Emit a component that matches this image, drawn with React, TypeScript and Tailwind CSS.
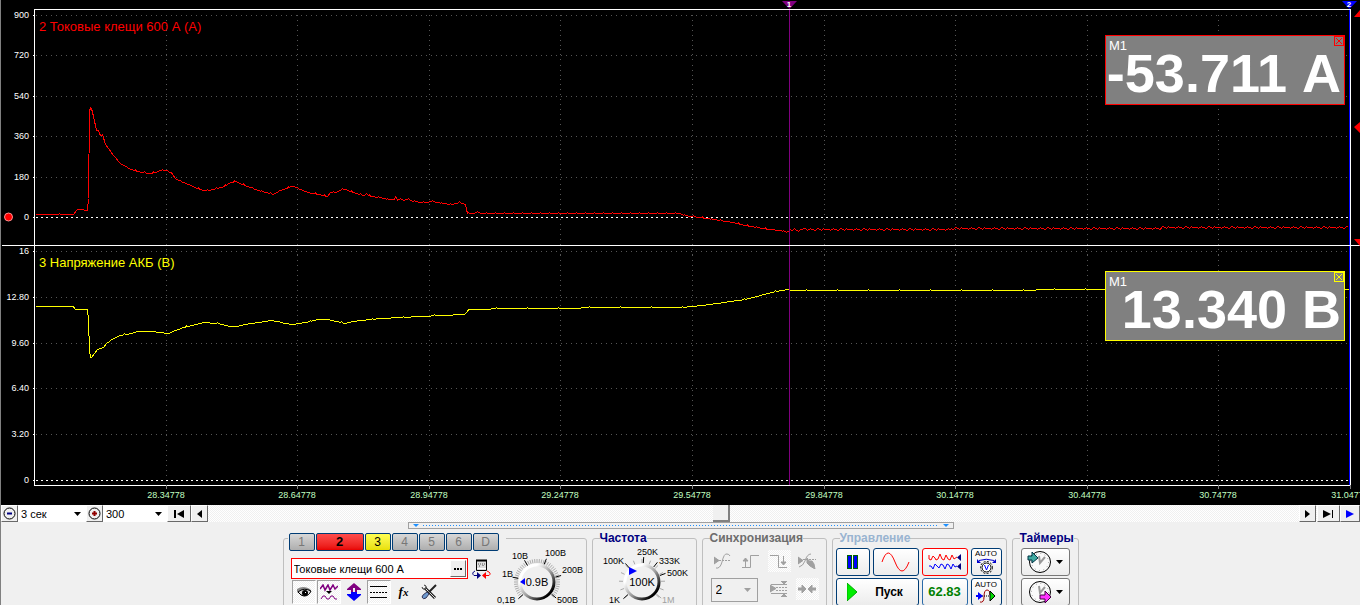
import { useState, type ReactNode } from "react";
import clsx from "clsx";

type Point = [number, number];

const CURRENT: Point[] = [
  [35, 214], [58, 214], [59, 213], [60, 214], [73, 214], [75, 211], [77, 209], [83, 209], [84, 210], [87, 210],
  [88, 198], [89, 111], [90, 107], [91, 108], [93, 116], [96, 130], [98, 130], [100, 135], [102, 134], [105, 144],
  [109, 149], [113, 155], [120, 163], [125, 166], [131, 169], [137, 171], [143, 172], [149, 173], [155, 172],
  [160, 170], [167, 170], [172, 174], [176, 179], [183, 182], [190, 185], [197, 188], [203, 190], [209, 190],
  [216, 188], [224, 186], [230, 182], [236, 181], [242, 184], [250, 187], [258, 190], [266, 192], [273, 194],
  [280, 190], [286, 188], [291, 186], [294, 186], [300, 189], [307, 192], [318, 194], [327, 196], [330, 192],
  [335, 192], [341, 189], [345, 189], [350, 191], [356, 193], [364, 195], [366, 193], [370, 196], [380, 197],
  [388, 199], [394, 199], [395, 196], [397, 200], [400, 198], [404, 200], [408, 198], [412, 201], [424, 202],
  [432, 201], [442, 203], [452, 204], [459, 202], [465, 204], [467, 213], [473, 213], [475, 212], [485, 213],
  [540, 213], [679, 213], [684, 215], [692, 216], [706, 218], [720, 220], [732, 222], [745, 225], [757, 227],
  [768, 229], [780, 230], [787, 232], [790, 229], [800, 230], [803, 228], [808, 229], [900, 229], [1000, 228],
  [1100, 228], [1220, 227], [1348, 227],
];

const VOLTAGE: Point[] = [
  [35, 306], [73, 306], [75, 309], [87, 309], [88, 320], [89, 350], [90, 357], [91, 357], [97, 349], [103, 347],
  [106, 343], [113, 338], [120, 335], [131, 333], [137, 331], [149, 331], [160, 332], [168, 333], [175, 330],
  [183, 327], [192, 325], [203, 322], [217, 323], [230, 326], [236, 326], [245, 324], [258, 322], [270, 320],
  [277, 321], [285, 323], [292, 324], [305, 322], [318, 319], [328, 319], [336, 321], [345, 323], [352, 321],
  [370, 319], [380, 318], [400, 317], [420, 316], [440, 315], [465, 314], [468, 309], [480, 309], [500, 308],
  [660, 307], [680, 307], [692, 306], [710, 304], [730, 301], [745, 299], [760, 295], [775, 291], [787, 289],
  [790, 290], [970, 290], [1100, 289], [1348, 289],
];

const NOISE = [0, 0, 1, 0, 0, -1, 0, 0, 0, 1, 1, 0, -1, -1, 0, 0, 1, 0, -1, 0, 0, 0, 0];

// One sample per column, with a little sensor noise from column `from` on.
function trace(points: Point[], from: number, every: number) {
  const out: string[] = [];
  let i = 0;
  for (let x = points[0][0]; x <= points[points.length - 1][0]; x++) {
    while (i < points.length - 2 && points[i + 1][0] <= x) i++;
    const [x0, y0] = points[i];
    const [x1, y1] = points[i + 1];
    let y = y0 + ((y1 - y0) * (x - x0)) / (x1 - x0);
    if (x >= from) y += NOISE[x % NOISE.length];
    else if (x > 120 && x % every === 0) y -= 1;
    out.push(`${x},${Math.round(y)}`);
  }
  return out.join(" ");
}

const UPPER = [["900", 15], ["720", 55], ["540", 96], ["360", 136], ["180", 177], ["0", 217]] as const;
const LOWER = [["16", 251], ["12.80", 297], ["9.60", 343], ["6.40", 388], ["3.20", 434], ["0", 480]] as const;
const TIMES = [
  ["28.34778", 166], ["28.64778", 297], ["28.94778", 429], ["29.24778", 560], ["29.54778", 692],
  ["29.84778", 824], ["30.14778", 955], ["30.44778", 1087], ["30.74778", 1218], ["31.04778", 1350],
] as const;

function Chart() {
  return (
    <svg viewBox="1 0 1359 505" className="block h-auto w-full bg-black font-['Liberation_Sans',sans-serif]">
      <g transform="translate(.5 .5)" shapeRendering="crispEdges" fill="none">
        <g stroke="#555" strokeDasharray="1 4">
          {[...UPPER.slice(0, 5), ...LOWER.slice(0, 5)].map(([, y]) => (
            <path key={y} d={`M35 ${y}H1349`} />
          ))}
          {TIMES.slice(0, 9).map(([, x]) => (
            <path key={x} d={`M${x} 14V484`} />
          ))}
        </g>
        <path d="M35 217H1349" stroke="#fff" strokeDasharray="2 3" />
        <path d="M35 480H1349" stroke="#fff" strokeDasharray="2 3" />
        <polyline points={trace(CURRENT, 787, 9)} stroke="#f00" />
        <polyline points={trace(VOLTAGE, 5000, 31)} stroke="#ff0" />
        <path d="M789 9V485" stroke="#800080" />
        <path d="M1349 9V485" stroke="#00f" />
        <path d="M34 485V9H1350V485M34 485H1350M1 245H1360" stroke="#fff" />
        {[...UPPER, ...LOWER].map(([, y]) => (
          <path key={y} d={`M32 ${y}H34`} stroke="#fff" />
        ))}
        {TIMES.map(([, x]) => (
          <path key={x} d={`M${x} 484V488`} stroke="#808080" />
        ))}
      </g>
      <circle cx="8.500" cy="217" r="4" fill="#f00" stroke="#ff9090" />
      <path d="M1360 10V17H1354ZM1360 122V133L1354 127ZM1354 239H1360V246Z" fill="#f00" />
      <path d="M782 1H797L789.5 9Z" fill="#800080" />
      <path d="M1342 1H1357L1349.5 9Z" fill="#00f" />
      <g fill="#fff" fontSize="8" fontWeight="bold" textAnchor="middle">
        <text x="789" y="7">1</text>
        <text x="1349" y="7">2</text>
      </g>
      <g fill="#fff" fontSize="9" textAnchor="end">
        {[...UPPER, ...LOWER].map(([label, y]) => (
          <text key={y} x="29" y={y + 3}>{label}</text>
        ))}
      </g>
      <g fill="#c0ffc0" fontSize="9" textAnchor="middle">
        {TIMES.map(([label, x]) => (
          <text key={x} x={x} y="498">{label}</text>
        ))}
      </g>
      <g fontSize="13">
        <text x="39" y="31" fill="#f00">2 Токовые клещи 600 А (А)</text>
        <text x="39" y="267" fill="#ff0">3 Напряжение АКБ (В)</text>
      </g>
    </svg>
  );
}

function Readout({ value, className }: { value: string; className: string }) {
  return (
    <div className={clsx("absolute right-[15px] h-[70px] w-60 border bg-[#808080]", className)}>
      <span className="absolute left-[3px] top-[2px] text-[13px] leading-4 text-white">M1</span>
      <button aria-label="Закрыть" className="absolute right-0 top-0 size-[10px] border border-current">
        <svg viewBox="0 0 8 8" className="block size-2" stroke="currentColor" shapeRendering="crispEdges">
          <path d="M1 1L7 7M7 1L1 7" />
        </svg>
      </button>
      <div className="whitespace-nowrap pr-[3px] text-right text-[54px] font-bold leading-[74px] text-white">
        {value}
      </div>
    </div>
  );
}

const RAISED =
  "flex h-full shrink-0 items-center justify-center border border-b-[#696969] border-l-white border-r-[#696969] border-t-white bg-[#f0f0f0]";
const DITHER = "bg-[repeating-conic-gradient(#fff_0_25%,#f0f0f0_0_50%)] bg-[length:2px_2px]";

function Combo({ label, value, className }: { label: string; value: string; className: string }) {
  return (
    <div className={clsx("relative h-full shrink-0", className)}>
      <select aria-label={label} className="block size-full appearance-none bg-transparent pl-[3px] text-[11px] leading-4 text-black">
        <option>{value}</option>
      </select>
      <svg viewBox="0 0 7 4" className="pointer-events-none absolute right-[5px] top-[7px] h-1 w-[7px]">
        <path d="M0 0H7L3.500 4Z" fill="currentColor" />
      </svg>
    </div>
  );
}

function ScrollRow() {
  return (
    <div className={clsx("flex h-[17px] items-center", DITHER)}>
      <button aria-label="Сжать" className={clsx(RAISED, "w-[17px]")}>
        <svg viewBox="0 0 13 13" className="size-[13px]" fill="none">
          <circle cx="6.500" cy="6.500" r="5.500" stroke="#000" />
          <path d="M4 6.500H9" stroke="#000080" strokeWidth="2" />
        </svg>
      </button>
      <Combo label="Развёртка" value="3 сек" className="w-[68px] bg-white" />
      <button aria-label="Растянуть" className={clsx(RAISED, "w-[17px]")}>
        <svg viewBox="0 0 13 13" className="size-[13px]" fill="none">
          <circle cx="6.500" cy="6.500" r="5.500" stroke="#000" />
          <path d="M4 6.500H9M6.500 4V9" stroke="#900000" strokeWidth="2" />
        </svg>
      </button>
      <Combo label="Масштаб" value="300" className="w-16 bg-white" />
      <button aria-label="В начало" className={clsx(RAISED, "w-6")}>
        <svg viewBox="0 0 11 8" className="h-2 w-[11px]"><path d="M0 0H2V8H0ZM10 0V8L3 4Z" /></svg>
      </button>
      <button aria-label="Назад" className={clsx(RAISED, "w-[17px]")}>
        <svg viewBox="0 0 5 8" className="h-2 w-[5px]"><path d="M5 0V8L0 4Z" /></svg>
      </button>
      <input
        type="range"
        aria-label="Прокрутка"
        min={0}
        max={1000}
        defaultValue={470}
        className="h-full min-w-0 flex-1 appearance-none bg-transparent [&::-webkit-slider-thumb]:h-[17px] [&::-webkit-slider-thumb]:w-[17px] [&::-webkit-slider-thumb]:appearance-none [&::-webkit-slider-thumb]:border-b-2 [&::-webkit-slider-thumb]:border-r-2 [&::-webkit-slider-thumb]:border-[#808080] [&::-webkit-slider-thumb]:bg-[#f0f0f0]"
      />
      <button aria-label="Вперёд" className={clsx(RAISED, "mr-px w-[17px]")}>
        <svg viewBox="0 0 5 8" className="h-2 w-[5px]"><path d="M0 0V8L5 4Z" /></svg>
      </button>
      <button aria-label="В конец" className={clsx(RAISED, "w-[23px]")}>
        <svg viewBox="0 0 11 8" className="h-2 w-[11px]"><path d="M0 0L8 4L0 8ZM9 0H10V8H9Z" /></svg>
      </button>
      <button aria-label="Следить" className={clsx(RAISED, "w-5")}>
        <svg viewBox="0 0 8 8" className="size-2"><path d="M0 0L8 4L0 8Z" fill="#00f" /></svg>
      </button>
    </div>
  );
}

function Splitter() {
  return (
    <div className="mx-auto flex h-[7px] w-[546px] items-center gap-1 border border-[#a0a0a0] px-1">
      <svg viewBox="0 0 6 3" className="h-[3px] w-[6px]"><path d="M0 0H6L3 3Z" fill="#1e90ff" /></svg>
      <div className="h-px min-w-0 flex-1 bg-[repeating-linear-gradient(90deg,#1e90ff_0_1px,transparent_1px_3px)]" />
      <svg viewBox="0 0 6 3" className="h-[3px] w-[6px]"><path d="M0 0H6L3 3Z" fill="#1e90ff" /></svg>
    </div>
  );
}

function Group({ title, tone, className, children }: { title: string; tone: string; className: string; children: ReactNode }) {
  return (
    <fieldset className={clsx("rounded-[3px] border border-[#bfbfbf]", className)}>
      <legend className={clsx("ml-[7px] h-[14px] text-[12px] font-bold leading-[14px]", tone)}>{title}</legend>
      {children}
    </fieldset>
  );
}

type Mark = { text: string; x: number; y: number; angle: number; off?: boolean };

function polar(cx: number, cy: number, r: number, deg: number) {
  const a = (deg * Math.PI) / 180;
  return `${(cx + r * Math.sin(a)).toFixed(1)} ${(cy - r * Math.cos(a)).toFixed(1)}`;
}

type KnobProps = { id: string; cx: number; step: number; marks: Mark[]; value: string; pointer: string; className: string; box: string };

function Knob({ id, cx, step, marks, value, pointer, className, box }: KnobProps) {
  const cy = 37;
  const ticks: number[] = [];
  for (let a = -132; a <= 132; a += step) ticks.push(a);
  return (
    <svg viewBox={box} className={clsx("block shrink-0", className)}>
      <defs>
        <linearGradient id={id} x1="0" y1="0" x2="1" y2="1">
          <stop offset="0.250" stopColor="#fff" />
          <stop offset="0.550" stopColor="#999" />
          <stop offset="0.850" stopColor="#000" />
        </linearGradient>
      </defs>
      {ticks.map((a) => (
        <path key={a} d={`M${polar(cx, cy, 19, a)}L${polar(cx, cy, 23, a)}`} stroke="#aaa" />
      ))}
      {marks.map((m) => (
        <path key={m.text} d={`M${polar(cx, cy, 19, m.angle)}L${polar(cx, cy, 25, m.angle)}`} stroke={m.off ? "#aaa" : "#000"} />
      ))}
      <circle cx={cx} cy={cy} r="17" fill="#f0f0f0" stroke={`url(#${id})`} strokeWidth="3" />
      <path d={pointer} fill="#00f" />
      <g fontSize="9">
        {marks.map((m) => (
          <text key={m.text} x={m.x} y={m.y} fill={m.off ? "#a0a0a0" : "#000"}>{m.text}</text>
        ))}
      </g>
      <text x={cx} y={cy + 4} fontSize="11" textAnchor="middle">{value}</text>
    </svg>
  );
}

const VOLT_MARKS: Mark[] = [
  { text: "0,1В", x: 1, y: 58, angle: -132 },
  { text: "1В", x: 6, y: 32, angle: -79 },
  { text: "10В", x: 16, y: 14, angle: -30 },
  { text: "100В", x: 49, y: 11, angle: 22 },
  { text: "200В", x: 66, y: 28, angle: 75 },
  { text: "500В", x: 61, y: 58, angle: 130 },
];

const RATE_MARKS: Mark[] = [
  { text: "1K", x: 15, y: 58, angle: -132 },
  { text: "100K", x: 9, y: 19, angle: -42 },
  { text: "250K", x: 43, y: 10, angle: 4 },
  { text: "333K", x: 65, y: 19, angle: 38 },
  { text: "500K", x: 73, y: 31, angle: 70 },
  { text: "1M", x: 68, y: 58, angle: 130, off: true },
];

const CHANNELS = ["1", "2", "3", "4", "5", "6", "D"];

function channelStyle(name: string) {
  if (name === "2") return "w-12 bg-linear-to-b from-[#ff4a4a] to-[#e80000] text-[13px] font-bold text-black";
  if (name === "3") return "w-[26px] bg-linear-to-b from-[#ffff50] to-[#e8e000] text-black";
  return "w-[26px] bg-linear-to-b from-[#d8d8d8] to-[#aeaeae] text-[#777]";
}

function ToolButton({ label, pressed, children }: { label: string; pressed?: boolean; children: ReactNode }) {
  return (
    <button
      aria-label={label}
      aria-pressed={pressed}
      className={clsx(
        "flex h-6 w-6 items-center justify-center border",
        pressed ? ["border-b-white border-l-[#a0a0a0] border-r-white border-t-[#a0a0a0]", DITHER] : "border-transparent",
      )}
    >
      {children}
    </button>
  );
}

function ChannelPanel() {
  const [name, setName] = useState("Токовые клещи 600 А");
  return (
    <fieldset className="mt-[2px] w-[303px] rounded-[3px] border border-[#bfbfbf]">
      <legend className="ml-1 h-[10px] w-[218px]">
        <div className="flex gap-px pl-px">
          {CHANNELS.map((c) => (
            <button key={c} className={clsx("h-[18px] rounded-[2px] border border-[#003c74] text-[12px] leading-4", channelStyle(c))}>
              {c}
            </button>
          ))}
        </div>
      </legend>
      <div className="flex">
        <div className="ml-[7px] w-[205px] pt-[15px]">
          <div className="flex items-center gap-1">
            <div className="flex h-[21px] w-[177px] border border-[#f00] bg-white p-px">
              <input
                aria-label="Имя канала"
                value={name}
                onChange={(e) => setName(e.target.value)}
                className="min-w-0 flex-1 pl-px text-[11px] leading-4 text-black outline-none"
              />
              <button aria-label="Выбрать датчик" className={clsx(RAISED, "w-4")}>
                <svg viewBox="0 0 8 2" className="h-[2px] w-2"><path d="M0 0H2V2H0ZM3 0H5V2H3ZM6 0H8V2H6Z" /></svg>
              </button>
            </div>
            <button aria-label="Полярность">
              <svg viewBox="0 0 20 20" className="block size-5" fill="none">
                <path d="M4.500 1.500H14.500V11.500H4.500Z" stroke="#000" fill="#ddd" />
                <path d="M4 1.500H15" stroke="#000" strokeWidth="2" />
                <path d="M6 5H13M7 7H9M11 6V8" stroke="#555" strokeDasharray="1 1" />
                <path d="M5 9.500H14" stroke="#fff" />
                <path d="M3 12Q-1 14 2 16.500H5" stroke="#000080" />
                <path d="M5 13L9 16.500L5 20Z" fill="#000080" />
                <path d="M15 12Q20 14 17 16.500H14" stroke="#f00" />
                <path d="M14 13L10 16.500L14 20Z" fill="#f00" />
              </svg>
            </button>
          </div>
          <div className="flex gap-px pl-px pt-px">
            <ToolButton label="Показать канал" pressed>
              <svg viewBox="0 0 16 12" className="h-3 w-4">
                <path d="M1 3Q7 -1 14 3L15 5L12 9Q7 12 4 8L1 6Z" fill="#888" />
                <path d="M2 6Q8 1 15 5Q13 10 8 10Q5 10 2 6Z" fill="#ddd" stroke="#000" />
                <circle cx="9" cy="7" r="3" fill="#000" />
                <path d="M9 6H10V7H9Z" fill="#fff" />
              </svg>
            </ToolButton>
            <ToolButton label="Фильтр" pressed>
              <svg viewBox="0 0 18 16" className="h-4 w-[18px]" fill="none" stroke="#800080">
                <path d="M0 5L3 1L5 6L8 1L10 6L13 1L15 5L18 2" strokeWidth="1.500" />
                <path d="M1 15L3 12H5L7 15H9L11 12H13L15 15H17" />
                <path d="M6 7H12L9 10Z" fill="#000" stroke="none" />
              </svg>
            </ToolButton>
            <ToolButton label="Инвертировать">
              <svg viewBox="0 0 14 18" className="h-[18px] w-[14px]">
                <path d="M7 0L14 6V7H10V9H4V7H0V6Z" fill="#800080" />
                <path d="M7 18L14 12V11H10V9H4V11H0V12Z" fill="#00f" />
                <path d="M6 5H8V9H6Z" fill="#f0f0f0" />
              </svg>
            </ToolButton>
            <ToolButton label="Уровни" pressed>
              <svg viewBox="0 0 17 12" className="h-3 w-[17px]" stroke="#000" shapeRendering="crispEdges">
                <path d="M0 0.500H17M0 11.500H17" />
                <path d="M0 6.500H17" strokeDasharray="2 1" />
              </svg>
            </ToolButton>
            <ToolButton label="Функция">
              <span className="font-['Liberation_Serif',serif] text-[13px] font-bold italic leading-4 text-black">
                f<span className="text-[11px]">x</span>
              </span>
            </ToolButton>
            <ToolButton label="Настройка">
              <svg viewBox="0 0 16 16" className="size-4" fill="none">
                <path d="M4 4L14 14" stroke="#222" strokeWidth="3" />
                <path d="M4 4L14 14" stroke="#ddd" />
                <path d="M1 3L2 5H5V2L3 1" stroke="#333" />
                <path d="M15 1L8 8" stroke="#222" strokeWidth="2" />
                <path d="M6 8L8 10L5 14Q2 16 1 13Q1 11 6 8Z" fill="#6f9bd0" stroke="#335" />
              </svg>
            </ToolButton>
          </div>
        </div>
        <Knob
          id="volt-rim"
          cx={41}
          step={6}
          marks={VOLT_MARKS}
          value="0.9В"
          pointer="M24 37L29 33V40Z"
          box="0 0 90 62"
          className="mt-[2px] h-[62px] w-[90px]"
        />
      </div>
    </fieldset>
  );
}

function SyncButton({ label, lit, children }: { label: string; lit?: boolean; children: ReactNode }) {
  return (
    <button aria-label={label} disabled className={clsx("flex h-[22px] w-[23px] items-center justify-center", lit && DITHER)}>
      <svg viewBox="0 0 18 16" className="h-4 w-[18px]" fill="none" stroke="#a0a0a0">
        {children}
      </svg>
    </button>
  );
}

function SyncPanel() {
  return (
    <Group title="Синхронизация" tone="text-[#6d6d6d]" className="w-[125px]">
      <div className="flex gap-[5px] pl-[9px] pt-[5px]">
        <SyncButton label="По уровню">
          <path d="M0 4L5 7.500L0 11Z" fill="#a0a0a0" />
          <path d="M2 15Q6 16 8 9Q10 0 13 1Q15 1 16 3" />
          <path d="M5 7.500H17" strokeDasharray="2 1" />
        </SyncButton>
        <SyncButton label="По фронту">
          <path d="M0 14.500H8.500V2.500H17" />
          <path d="M3.500 14V7" />
          <path d="M1 8H6L3.500 5Z" fill="#a0a0a0" />
        </SyncButton>
        <SyncButton label="По спаду" lit>
          <path d="M0 2.500H8.500V14.500H17" />
          <path d="M13.500 3V10" />
          <path d="M11 9H16L13.500 12Z" fill="#a0a0a0" />
        </SyncButton>
        <SyncButton label="Вручную">
          <path d="M0 4L5 7.500L0 11Z" fill="#a0a0a0" />
          <path d="M1 14Q5 13 7 8Q9 1 13 1" />
          <path d="M5 6.500H18" strokeDasharray="2 1" />
          <path d="M9 5L11 8H14L16 11L17 16L12 13L9 10Z" fill="#a0a0a0" />
        </SyncButton>
      </div>
      <div className="flex pl-2 pt-[6px]">
        <div className="relative mr-[10px] h-6 w-[47px] border border-[#a0a0a0]">
          <select aria-label="Канал синхронизации" className="block size-full appearance-none pl-1 text-[12px] text-black">
            <option>2</option>
          </select>
          <svg viewBox="0 0 7 4" className="pointer-events-none absolute right-[6px] top-[9px] h-1 w-[7px]">
            <path d="M0 0H7L3.500 4Z" fill="#a0a0a0" />
          </svg>
        </div>
        <SyncButton label="Гистерезис">
          <path d="M0 4L6 7.500L0 11Z" fill="#a0a0a0" />
          <path d="M1 3.500H17M1 12.500H17" />
          <path d="M6 6.500H17M6 9.500H17" strokeDasharray="2 1" />
          <path d="M11 0H17L14 3ZM11 16H17L14 13Z" fill="#a0a0a0" />
        </SyncButton>
        <div className="w-[5px]" />
        <SyncButton label="По центру" lit>
          <path d="M0 8H5M18 8H13" strokeWidth="3" />
          <path d="M4 4L8 8L4 12ZM14 4L10 8L14 12Z" fill="#a0a0a0" />
        </SyncButton>
      </div>
    </Group>
  );
}

const XP = "flex h-7 items-center justify-center rounded-[3px] border bg-linear-to-b from-white to-[#ececec]";

function ControlPanel() {
  return (
    <Group title="Управление" tone="text-[#99b4d1]" className="w-[175px]">
      <div className="flex gap-[3px] pl-[3px] pt-[3px]">
        <button aria-label="Пауза" className={clsx(XP, "w-[34px] border-[#003c74]")}>
          <svg viewBox="0 0 12 14" className="h-[14px] w-3" fill="#00f" stroke="#006400" shapeRendering="crispEdges">
            <path d="M0.500 0.500H4.500V13.500H0.500ZM6.500 0.500H10.500V13.500H6.500Z" />
          </svg>
        </button>
        <button aria-label="Осциллограф" className={clsx(XP, "w-[46px] border-[#003c74]")}>
          <svg viewBox="0 0 29 20" className="h-5 w-[29px]" fill="none" stroke="#f00">
            <path d="M1 10Q7 -8 14 10T28 10" />
          </svg>
        </button>
        <button aria-label="Самописец" className={clsx(XP, "w-[46px] border-[#f00]")}>
          <svg viewBox="0 0 34 18" className="h-[18px] w-[34px]" fill="none">
            <path d="M1 2V6L3 7L5 3L7 5L8 7L10 6L12 1L14 6L16 7L18 2L20 6L22 7L24 2L26 6L29 4" stroke="#f00" />
            <path d="M1 13H3L5 16L7 11L9 13L11 15L13 11L15 12L17 16L19 11L21 12L23 16L25 11L27 14L29 13" stroke="#00f" />
            <path d="M33 1V8L29 4.500ZM33 10V17L29 13.500Z" fill="#000080" />
          </svg>
        </button>
        <button className={clsx(XP, "w-[31px] flex-col border-[#003c74]")}>
          <span className="text-[8px] leading-[8px] text-black">AUTO</span>
          <svg viewBox="0 0 19 16" className="h-4 w-[19px]" fill="none">
            <path d="M2 2.500Q9 0 17 2.500" stroke="#00c" />
            <path d="M0 1V5H4ZM19 1V5H15Z" fill="#00c" />
            <circle cx="9.500" cy="9.500" r="6" stroke="#000" strokeDasharray="2 1.500" />
            <circle cx="9.500" cy="9.500" r="4.500" fill="#fff" stroke="#000" />
            <path d="M7.500 7L9.500 12L11.500 7" stroke="#00f" />
          </svg>
        </button>
      </div>
      <div className="flex gap-[3px] pl-[3px] pt-[2px]">
        <button className={clsx(XP, "w-[83px] gap-[18px] border-[#003c74] pr-1 text-[12px] font-bold text-black")}>
          <svg viewBox="0 0 10 18" className="h-[18px] w-[10px]">
            <path d="M0 0L10 9L0 18Z" fill="#0e0" stroke="#0a0" />
          </svg>
          Пуск
        </button>
        <output className={clsx(XP, "w-[46px] border-[#2a6aa8] text-[13px] font-bold text-[#008000]")}>62.83</output>
        <button className={clsx(XP, "w-[31px] flex-col border-[#003c74]")}>
          <span className="text-[8px] leading-[8px] text-black">AUTO</span>
          <svg viewBox="0 0 20 14" className="h-[14px] w-5" fill="none">
            <path d="M4 13Q8 14 8 8Q8 1 11 1Q14 1 14 6" stroke="#a00000" />
            <path d="M4 7H18" stroke="#000" strokeDasharray="1 1" />
            <path d="M0 7H3" stroke="#00f" strokeWidth="2" />
            <path d="M2 3V11L7 7Z" fill="#00f" />
            <path d="M14 2V12L19 7Z" fill="#0d0" stroke="#000" />
          </svg>
        </button>
      </div>
    </Group>
  );
}

function TimerButton({ label, children }: { label: string; children: ReactNode }) {
  return (
    <button aria-label={label} className={clsx(XP, "w-[49px] gap-1 border-[#777]")}>
      <svg viewBox="0 0 25 24" className="h-6 w-[25px] shrink-0" fill="none">
        <circle cx="13" cy="12" r="10.500" fill="#fafafa" stroke="#000" />
        <circle cx="13" cy="12" r="8.500" stroke="#999" strokeDasharray="1 3.450" />
        <path d="M12 6L13 13L18 7" stroke="#999" strokeWidth="2" />
        {children}
      </svg>
      <svg viewBox="0 0 7 4" className="h-1 w-[7px]"><path d="M0 0H7L3.500 4Z" /></svg>
    </button>
  );
}

export default function App() {
  return (
    <div className="h-screen overflow-hidden border-l border-[#808080] bg-[#f0f0f0] font-['Liberation_Sans',Arial,sans-serif]">
      <div className="relative">
        <Chart />
        <Readout value="-53.711 А" className="top-[35px] border-[#f00] text-[#f00]" />
        <Readout value="13.340 В" className="top-[271px] border-[#ff0] text-[#ff0]" />
      </div>
      <ScrollRow />
      <Splitter />
      <div className="flex justify-center gap-[5px] pt-[2px]">
        <ChannelPanel />
        <Group title="Частота" tone="text-[#000080]" className="w-[105px]">
          <Knob
            id="rate-rim"
            cx={48}
            step={22}
            marks={RATE_MARKS}
            value="100K"
            pointer="M35 22L43 26L35 30Z"
            box="0 0 100 62"
            className="ml-px h-[62px] w-[100px]"
          />
        </Group>
        <SyncPanel />
        <ControlPanel />
        <Group title="Таймеры" tone="text-[#000080]" className="w-[67px]">
          <div className="flex flex-col gap-[2px] pl-2 pt-[3px]">
            <TimerButton label="Таймер пуска">
              <path d="M1 6H5V2L11 8L5 13V10H1Z" fill="#3fa9a0" stroke="#034" />
            </TimerButton>
            <TimerButton label="Таймер остановки">
              <path d="M13 15H18V11L24 17L18 23V19H13Z" fill="#f3f" stroke="#404" />
            </TimerButton>
          </div>
        </Group>
      </div>
    </div>
  );
}
